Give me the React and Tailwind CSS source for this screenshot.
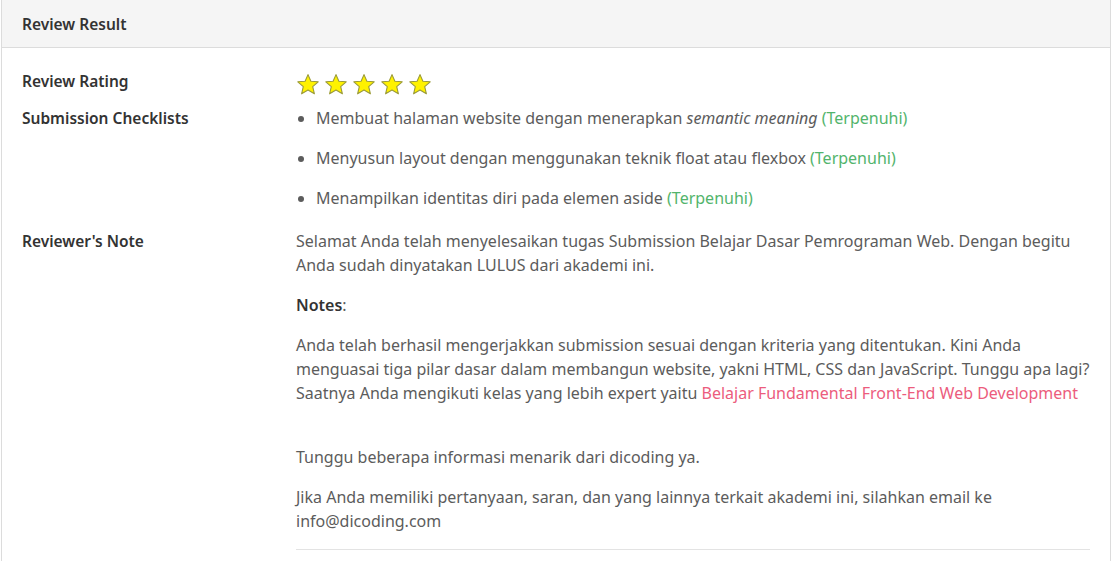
import React from "react";

const Star = () => (
  <svg width="24" height="24" viewBox="0 0 24 24">
    <polygon
      points="12,1.6 14.9,8.2 22.2,8.8 16.7,13.6 18.4,20.8 12,17 5.6,20.8 7.3,13.6 1.8,8.8 9.1,8.2"
      fill="#fff200"
      stroke="#9a9a3a"
      strokeWidth="1.1"
      strokeLinejoin="round"
    />
  </svg>
);

const checklists = [
  {
    text: (
      <>
        Membuat halaman website dengan menerapkan <em>semantic meaning</em>
      </>
    ),
  },
  { text: "Menyusun layout dengan menggunakan teknik float atau flexbox" },
  { text: "Menampilkan identitas diri pada elemen aside" },
];

const App = () => {
  return (
    <div
      className="w-[1114px] h-[561px] overflow-hidden bg-white text-[16px] leading-6 text-[#5c5c5c]"
      style={{ fontFamily: '"Noto Sans", "Open Sans", sans-serif' }}
    >
      <div className="ml-px w-[1110px] border-x border-[#dcdcdc] h-full">
        <div className="h-12 flex items-center px-5 pt-px bg-[#f5f5f5] border-b border-[#dcdcdc]">
          <h2 className="font-semibold text-[15.5px] text-[#333]">Review Result</h2>
        </div>

        <div className="px-5 pt-[21px]">
          {/* rating */}
          <div className="flex mb-[7px]">
            <div className="w-[274px] shrink-0 font-semibold text-[15.5px] text-[#333]">
              Review Rating
            </div>
            <div className="flex gap-1 h-[30px] pt-[2px] items-center">
              {[1, 2, 3, 4, 5].map((i) => (
                <Star key={i} />
              ))}
            </div>
          </div>

          {/* checklists */}
          <div className="flex mb-[3px]">
            <div className="w-[274px] shrink-0 font-semibold text-[15.5px] text-[#333]">
              Submission Checklists
            </div>
            <ul className="list-disc pl-5 whitespace-nowrap">
              {checklists.map((c, i) => (
                <li key={i} className="mb-4">
                  {c.text}{" "}
                  <span className="text-[#52b46c]">(Terpenuhi)</span>
                </li>
              ))}
            </ul>
          </div>

          {/* reviewer note */}
          <div className="flex">
            <div className="w-[274px] shrink-0 font-semibold text-[15.5px] text-[#333]">
              Reviewer's Note
            </div>
            <div className="w-[794px] whitespace-nowrap">
              <p className="mb-4">
                Selamat Anda telah menyelesaikan tugas Submission Belajar Dasar
                Pemrograman Web. Dengan begitu
                <br />
                Anda sudah dinyatakan LULUS dari akademi ini.
              </p>
              <p className="mb-4">
                <strong className="font-semibold text-[#333]">Notes</strong>:
              </p>
              <p className="mb-4">
                Anda telah berhasil mengerjakkan submission sesuai dengan
                kriteria yang ditentukan. Kini Anda
                <br />
                menguasai tiga pilar dasar dalam membangun website, yakni HTML,
                CSS dan JavaScript. Tunggu apa lagi?
                <br />
                Saatnya Anda mengikuti kelas yang lebih expert yaitu{" "}
                <a href="#" className="text-[#ec5c7d]">
                  Belajar Fundamental Front-End Web Development
                </a>
                <br />
                {"\u00a0"}
              </p>
              <p className="mb-4">
                Tunggu beberapa informasi menarik dari dicoding ya.
              </p>
              <p className="mb-4">
                Jika Anda memiliki pertanyaan, saran, dan yang lainnya terkait
                akademi ini, silahkan email ke
                <br />
                info@dicoding.com
              </p>
              <hr className="border-t border-[#e3e3e3]" />
            </div>
          </div>
        </div>
      </div>
    </div>
  );
};

export default App;
